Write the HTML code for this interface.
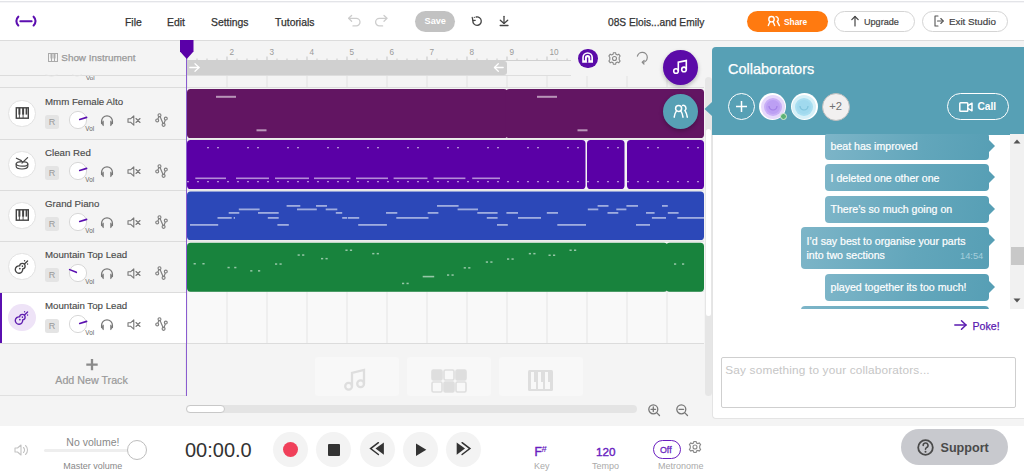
<!DOCTYPE html><html><head><meta charset="utf-8"><style>
*{box-sizing:border-box;margin:0;padding:0}
html,body{width:1024px;height:472px;overflow:hidden;background:#fff;font-family:"Liberation Sans",sans-serif;color:#333}
.a{position:absolute}
.t{position:absolute;white-space:nowrap;line-height:1}
svg{position:absolute;overflow:visible}
</style></head><body>
<div class="a" style="left:0px;top:0px;width:1024px;height:41px;background:#fff;border-bottom:1px solid #dcdcdc"></div>
<div class="a" style="left:0px;top:1px;width:1024px;height:1px;background:#e3e4e8"></div>
<div class="a" style="left:0px;top:2px;width:1024px;height:1px;background:#f5f5f7"></div>
<svg style="left:14px;top:14px" width="24" height="15" viewBox="0 0 24 15"><g stroke="#5c0fb0" stroke-width="2.1" fill="none" stroke-linecap="round"><path d="M4.3 2.7 A6.0 6.0 0 0 0 4.3 11.5"/><path d="M19.6 2.7 A6.0 6.0 0 0 1 19.6 11.5"/><path d="M6.35 7.2 H17.6"/></g></svg>
<div class="t" style="left:125px;top:17.8px;font-size:10.4px;color:#333;-webkit-text-stroke:0.25px #333">File</div>
<div class="t" style="left:167px;top:17.8px;font-size:10.4px;color:#333;-webkit-text-stroke:0.25px #333">Edit</div>
<div class="t" style="left:211px;top:17.8px;font-size:10.4px;color:#333;-webkit-text-stroke:0.25px #333">Settings</div>
<div class="t" style="left:275px;top:17.8px;font-size:10.4px;color:#333;-webkit-text-stroke:0.25px #333">Tutorials</div>
<svg style="left:344px;top:10px" width="50" height="22" viewBox="0 0 50 22"><g stroke="#cdcdcd" stroke-width="1.3" fill="none" stroke-linecap="round" stroke-linejoin="round"><path d="M5 8.3 H12.2 A3.8 3.8 0 0 1 12.2 15.9 H9"/><path d="M7.6 5.5 L4.6 8.3 L7.6 11.2"/><path d="M42.6 8.3 H35.4 A3.8 3.8 0 0 0 35.4 15.9 H38.6"/><path d="M40 5.5 L43 8.3 L40 11.2"/></g></svg>
<div class="a" style="left:415px;top:11px;width:40px;height:21px;background:#c2c2c2;border-radius:11px"></div>
<div class="t" style="left:424.5px;top:16.8px;font-size:9.2px;color:#fff;font-weight:bold">Save</div>
<svg style="left:464px;top:10px" width="50" height="22" viewBox="0 0 50 22"><g stroke="#444" stroke-width="1.3" fill="none" stroke-linecap="round" stroke-linejoin="round"><path d="M12.2 7 A4.2 4.2 0 1 1 8.9 10.6"/><path d="M8.4 8.2 L8.9 10.6 L11.2 10.3"/><path d="M40 6.3 V13.3"/><path d="M36.3 10.2 L40 13.4 L43.7 10.2"/><path d="M36.2 15.5 H44"/></g><circle cx="8.2" cy="7.3" r="0.65" fill="#444"/><circle cx="10.3" cy="7.3" r="0.65" fill="#444"/></svg>
<div class="t" style="left:608px;top:17.8px;font-size:10.2px;color:#333;-webkit-text-stroke:0.25px #333">08S Elois...and Emily</div>
<div class="a" style="left:747px;top:11px;width:81px;height:21px;background:#ff7a10;border-radius:11px"></div>
<svg style="left:760px;top:10px" width="30" height="22" viewBox="0 0 30 22"><g stroke="#fff" stroke-width="1.4" fill="none" stroke-linecap="round"><circle cx="11.5" cy="9.2" r="2.7"/><path d="M8.3 15.6 L10 11.6 M14.7 15.6 L13 11.6"/><path d="M16 6.6 A2.7 2.7 0 0 1 17.3 11.4 L19.4 15.6"/></g></svg>
<div class="t" style="left:784px;top:18.3px;font-size:8.4px;color:#fff;font-weight:bold">Share</div>
<div class="a" style="left:834px;top:11px;width:81px;height:21px;border:1px solid #d4d4d4;border-radius:11px;background:#fff"></div>
<svg style="left:851px;top:15px" width="8" height="12" viewBox="0 0 8 12"><g stroke="#444" stroke-width="1.2" fill="none" stroke-linecap="round" stroke-linejoin="round"><path d="M4 11 V1.5"/><path d="M0.8 4.7 L4 1.5 L7.2 4.7"/></g></svg>
<div class="t" style="left:864px;top:17.7px;font-size:9.1px;color:#444;-webkit-text-stroke:0.2px #444">Upgrade</div>
<div class="a" style="left:922px;top:11px;width:86px;height:21px;border:1px solid #d4d4d4;border-radius:11px;background:#fff"></div>
<svg style="left:934px;top:15px" width="10" height="12" viewBox="0 0 10 12"><g stroke="#555" stroke-width="1.1" fill="none" stroke-linecap="round" stroke-linejoin="round"><path d="M4 1 H1 V11 H4"/><path d="M3.5 6 H9.2"/><path d="M6.8 3.5 L9.2 6 L6.8 8.5"/></g></svg>
<div class="t" style="left:949px;top:16.5px;font-size:9.8px;color:#444;-webkit-text-stroke:0.2px #444">Exit Studio</div>
<div class="a" style="left:0px;top:41px;width:1024px;height:385px;background:#f4f4f4"></div>
<div class="a" style="left:0px;top:41px;width:186px;height:35px;background:#f4f4f4;border-bottom:1px solid #dcdcdc"></div>
<svg style="left:48px;top:53px" width="10" height="9" viewBox="0 0 10 9"><g stroke="#aaa" stroke-width="1" fill="none"><rect x="0.5" y="0.5" width="9" height="8"/><path d="M3.5 0.5 V8.5 M6.5 0.5 V8.5"/></g><rect x="2.5" y="0.5" width="2" height="5" fill="#aaa"/><rect x="5.5" y="0.5" width="2" height="5" fill="#aaa"/></svg>
<div class="t" style="left:61.3px;top:52.6px;font-size:9.9px;color:#999;-webkit-text-stroke:0.25px #999">Show Instrument</div>
<div class="a" style="left:0;top:75px;width:184px;height:13px;overflow:hidden">
</div>
<div class="a" style="left:0px;top:87px;width:186px;height:1px;background:#dcdcdc"></div>
<svg style="left:44px;top:75px" width="40" height="3" viewBox="0 0 40 3"><path d="M1.5 0 Q7.5 2.2 13.5 0" fill="none" stroke="#e2e2e2"/><path d="M28 0 Q33 2 38 0" fill="none" stroke="#e2e2e2"/></svg>
<div class="t" style="left:86px;top:75.2px;font-size:6.2px;color:#666;">Vol</div>
<div class="a" style="left:0px;top:88px;width:186px;height:51px;background:#f4f4f4"></div>
<div class="a" style="left:8.4px;top:99.9px;width:27.3px;height:27.3px;background:#fff;border-radius:50%;border:1px solid #e2e2e2"></div>
<svg style="left:15px;top:107px" width="14" height="12" viewBox="0 0 14 12"><g fill="none" stroke="#444" stroke-width="1.4"><rect x="1.3" y="0.8" width="12" height="10.4"/></g><rect x="3.4" y="0.8" width="2" height="6.8" fill="#444"/><rect x="7.1" y="0.8" width="2" height="6.8" fill="#444"/><rect x="10.6" y="0.8" width="1.6" height="6.8" fill="#444"/><path d="M4.4 7 V11 M8.1 7 V11" stroke="#444" stroke-width="0.9"/></svg>
<div class="t" style="left:45px;top:97.3px;font-size:9.7px;color:#4a4a4a;-webkit-text-stroke:0.15px #4a4a4a">Mmm Female Alto</div>
<div class="a" style="left:45px;top:114.7px;width:14px;height:14px;background:#e4e4e4;border-radius:2.5px"></div>
<div class="t" style="left:48.7px;top:117.6px;font-size:9px;color:#999;">R</div>
<svg style="left:67.6px;top:110.3px" width="20" height="20" viewBox="0 0 20 20"><circle cx="10" cy="10" r="8.6" fill="#fff" stroke="#d8d8d8" stroke-width="1"/><path d="M11.72 9.47 L18.61 7.37" stroke="#5a0fb0" stroke-width="1.6" stroke-linecap="round"/></svg>
<div class="t" style="left:85.3px;top:126.1px;font-size:6.3px;color:#666;">Vol</div>
<svg style="left:100px;top:114px" width="14" height="12" viewBox="0 0 14 12"><g stroke="#777" stroke-width="1.3" fill="none" stroke-linecap="round"><path d="M1.6 9.5 V7.2 A5.4 5.4 0 0 1 12.4 7.2 V9.5"/></g><path d="M3.8 6.6 V12.3 A3 3 0 0 1 3.8 6.6 Z" fill="#808080"/><path d="M10.2 6.6 V12.3 A3 3 0 0 0 10.2 6.6 Z" fill="#808080"/></svg>
<svg style="left:127px;top:115px" width="14" height="11" viewBox="0 0 14 11"><g stroke="#777" stroke-width="1.1" fill="none" stroke-linejoin="round" stroke-linecap="round"><path d="M1 3.8 H3.5 L6.8 0.8 V10.2 L3.5 7.2 H1 Z"/><path d="M9 3.5 L13 7.5 M13 3.5 L9 7.5"/></g></svg>
<svg style="left:155px;top:113px" width="13" height="14" viewBox="0 0 13 14"><g stroke="#808080" stroke-width="1.15" fill="none"><path d="M2.2 7.4 L4.5 2.2 L8.6 11.8 L10.8 5.5"/><circle cx="2.2" cy="7.4" r="1.45" fill="#f3f3f3"/><circle cx="4.5" cy="2.2" r="1.45" fill="#f3f3f3"/><circle cx="8.6" cy="11.8" r="1.5" fill="#f3f3f3"/><circle cx="10.8" cy="5.5" r="1.45" fill="#f3f3f3"/></g></svg>
<div class="a" style="left:0px;top:139px;width:186px;height:51px;background:#f4f4f4"></div>
<div class="a" style="left:8.4px;top:150.9px;width:27.3px;height:27.3px;background:#fff;border-radius:50%;border:1px solid #e2e2e2"></div>
<svg style="left:15px;top:157px" width="14" height="13" viewBox="0 0 14 13"><g fill="none" stroke="#4a4a4a" stroke-width="1.2" stroke-linecap="round"><path d="M1.4 1.2 L6.4 3.6"/><path d="M12.6 0.6 L7 6"/><path d="M1.2 6.9 V9.6 A5.8 2.4 0 0 0 12.8 9.6 V6.9"/><ellipse cx="7" cy="6.9" rx="5.8" ry="2.3"/></g></svg>
<div class="t" style="left:45px;top:148.3px;font-size:9.7px;color:#4a4a4a;-webkit-text-stroke:0.15px #4a4a4a">Clean Red</div>
<div class="a" style="left:45px;top:165.7px;width:14px;height:14px;background:#e4e4e4;border-radius:2.5px"></div>
<div class="t" style="left:48.7px;top:168.6px;font-size:9px;color:#999;">R</div>
<svg style="left:67.6px;top:161.3px" width="20" height="20" viewBox="0 0 20 20"><circle cx="10" cy="10" r="8.6" fill="#fff" stroke="#d8d8d8" stroke-width="1"/><path d="M11.72 9.47 L18.61 7.37" stroke="#5a0fb0" stroke-width="1.6" stroke-linecap="round"/></svg>
<div class="t" style="left:85.3px;top:177.1px;font-size:6.3px;color:#666;">Vol</div>
<svg style="left:100px;top:165px" width="14" height="12" viewBox="0 0 14 12"><g stroke="#777" stroke-width="1.3" fill="none" stroke-linecap="round"><path d="M1.6 9.5 V7.2 A5.4 5.4 0 0 1 12.4 7.2 V9.5"/></g><path d="M3.8 6.6 V12.3 A3 3 0 0 1 3.8 6.6 Z" fill="#808080"/><path d="M10.2 6.6 V12.3 A3 3 0 0 0 10.2 6.6 Z" fill="#808080"/></svg>
<svg style="left:127px;top:166px" width="14" height="11" viewBox="0 0 14 11"><g stroke="#777" stroke-width="1.1" fill="none" stroke-linejoin="round" stroke-linecap="round"><path d="M1 3.8 H3.5 L6.8 0.8 V10.2 L3.5 7.2 H1 Z"/><path d="M9 3.5 L13 7.5 M13 3.5 L9 7.5"/></g></svg>
<svg style="left:155px;top:164px" width="13" height="14" viewBox="0 0 13 14"><g stroke="#808080" stroke-width="1.15" fill="none"><path d="M2.2 7.4 L4.5 2.2 L8.6 11.8 L10.8 5.5"/><circle cx="2.2" cy="7.4" r="1.45" fill="#f3f3f3"/><circle cx="4.5" cy="2.2" r="1.45" fill="#f3f3f3"/><circle cx="8.6" cy="11.8" r="1.5" fill="#f3f3f3"/><circle cx="10.8" cy="5.5" r="1.45" fill="#f3f3f3"/></g></svg>
<div class="a" style="left:0px;top:190px;width:186px;height:51px;background:#f4f4f4"></div>
<div class="a" style="left:8.4px;top:201.9px;width:27.3px;height:27.3px;background:#fff;border-radius:50%;border:1px solid #e2e2e2"></div>
<svg style="left:15px;top:209px" width="14" height="12" viewBox="0 0 14 12"><g fill="none" stroke="#444" stroke-width="1.4"><rect x="1.3" y="0.8" width="12" height="10.4"/></g><rect x="3.4" y="0.8" width="2" height="6.8" fill="#444"/><rect x="7.1" y="0.8" width="2" height="6.8" fill="#444"/><rect x="10.6" y="0.8" width="1.6" height="6.8" fill="#444"/><path d="M4.4 7 V11 M8.1 7 V11" stroke="#444" stroke-width="0.9"/></svg>
<div class="t" style="left:45px;top:199.3px;font-size:9.7px;color:#4a4a4a;-webkit-text-stroke:0.15px #4a4a4a">Grand Piano</div>
<div class="a" style="left:45px;top:216.7px;width:14px;height:14px;background:#e4e4e4;border-radius:2.5px"></div>
<div class="t" style="left:48.7px;top:219.6px;font-size:9px;color:#999;">R</div>
<svg style="left:67.6px;top:212.3px" width="20" height="20" viewBox="0 0 20 20"><circle cx="10" cy="10" r="8.6" fill="#fff" stroke="#d8d8d8" stroke-width="1"/><path d="M11.72 9.47 L18.61 7.37" stroke="#5a0fb0" stroke-width="1.6" stroke-linecap="round"/></svg>
<div class="t" style="left:85.3px;top:228.1px;font-size:6.3px;color:#666;">Vol</div>
<svg style="left:100px;top:216px" width="14" height="12" viewBox="0 0 14 12"><g stroke="#777" stroke-width="1.3" fill="none" stroke-linecap="round"><path d="M1.6 9.5 V7.2 A5.4 5.4 0 0 1 12.4 7.2 V9.5"/></g><path d="M3.8 6.6 V12.3 A3 3 0 0 1 3.8 6.6 Z" fill="#808080"/><path d="M10.2 6.6 V12.3 A3 3 0 0 0 10.2 6.6 Z" fill="#808080"/></svg>
<svg style="left:127px;top:217px" width="14" height="11" viewBox="0 0 14 11"><g stroke="#777" stroke-width="1.1" fill="none" stroke-linejoin="round" stroke-linecap="round"><path d="M1 3.8 H3.5 L6.8 0.8 V10.2 L3.5 7.2 H1 Z"/><path d="M9 3.5 L13 7.5 M13 3.5 L9 7.5"/></g></svg>
<svg style="left:155px;top:215px" width="13" height="14" viewBox="0 0 13 14"><g stroke="#808080" stroke-width="1.15" fill="none"><path d="M2.2 7.4 L4.5 2.2 L8.6 11.8 L10.8 5.5"/><circle cx="2.2" cy="7.4" r="1.45" fill="#f3f3f3"/><circle cx="4.5" cy="2.2" r="1.45" fill="#f3f3f3"/><circle cx="8.6" cy="11.8" r="1.5" fill="#f3f3f3"/><circle cx="10.8" cy="5.5" r="1.45" fill="#f3f3f3"/></g></svg>
<div class="a" style="left:0px;top:241px;width:186px;height:51px;background:#f4f4f4"></div>
<div class="a" style="left:8.4px;top:252.9px;width:27.3px;height:27.3px;background:#fff;border-radius:50%;border:1px solid #e2e2e2"></div>
<svg style="left:15px;top:258px" width="14" height="16" viewBox="0 0 14 16"><g transform="translate(6.2 9.3) rotate(45)"><g fill="none" stroke="#444" stroke-width="1.35" stroke-linecap="round" stroke-linejoin="round"><path d="M-2.1 0.1 A2.75 2.75 0 1 1 2.1 0.1 A3.7 3.7 0 1 1 -2.1 0.1 Z"/><path d="M0 -4.6 V-9"/></g><circle cx="0" cy="1.9" r="0.85" fill="#444"/><circle cx="0" cy="-1.7" r="0.8" fill="#444"/><circle cx="-2.2" cy="-7" r="0.7" fill="#444"/><circle cx="2.1" cy="-6.9" r="0.7" fill="#444"/></g></svg>
<div class="t" style="left:45px;top:250.3px;font-size:9.7px;color:#4a4a4a;-webkit-text-stroke:0.15px #4a4a4a">Mountain Top Lead</div>
<div class="a" style="left:45px;top:267.7px;width:14px;height:14px;background:#e4e4e4;border-radius:2.5px"></div>
<div class="t" style="left:48.7px;top:270.6px;font-size:9px;color:#999;">R</div>
<svg style="left:67.6px;top:263.3px" width="20" height="20" viewBox="0 0 20 20"><circle cx="10" cy="10" r="8.6" fill="#fff" stroke="#d8d8d8" stroke-width="1"/><path d="M8.33 9.33 L1.66 6.63" stroke="#5a0fb0" stroke-width="1.6" stroke-linecap="round"/></svg>
<div class="t" style="left:85.3px;top:279.1px;font-size:6.3px;color:#666;">Vol</div>
<svg style="left:100px;top:267px" width="14" height="12" viewBox="0 0 14 12"><g stroke="#777" stroke-width="1.3" fill="none" stroke-linecap="round"><path d="M1.6 9.5 V7.2 A5.4 5.4 0 0 1 12.4 7.2 V9.5"/></g><path d="M3.8 6.6 V12.3 A3 3 0 0 1 3.8 6.6 Z" fill="#808080"/><path d="M10.2 6.6 V12.3 A3 3 0 0 0 10.2 6.6 Z" fill="#808080"/></svg>
<svg style="left:127px;top:268px" width="14" height="11" viewBox="0 0 14 11"><g stroke="#777" stroke-width="1.1" fill="none" stroke-linejoin="round" stroke-linecap="round"><path d="M1 3.8 H3.5 L6.8 0.8 V10.2 L3.5 7.2 H1 Z"/><path d="M9 3.5 L13 7.5 M13 3.5 L9 7.5"/></g></svg>
<svg style="left:155px;top:266px" width="13" height="14" viewBox="0 0 13 14"><g stroke="#808080" stroke-width="1.15" fill="none"><path d="M2.2 7.4 L4.5 2.2 L8.6 11.8 L10.8 5.5"/><circle cx="2.2" cy="7.4" r="1.45" fill="#f3f3f3"/><circle cx="4.5" cy="2.2" r="1.45" fill="#f3f3f3"/><circle cx="8.6" cy="11.8" r="1.5" fill="#f3f3f3"/><circle cx="10.8" cy="5.5" r="1.45" fill="#f3f3f3"/></g></svg>
<div class="a" style="left:0px;top:292px;width:186px;height:51px;background:#fff"></div>
<div class="a" style="left:0px;top:292px;width:2px;height:51px;background:#5a0fb0"></div>
<div class="a" style="left:8.4px;top:303.9px;width:27.3px;height:27.3px;background:#eee3f7;border-radius:50%;border:none"></div>
<svg style="left:15px;top:309px" width="14" height="16" viewBox="0 0 14 16"><g transform="translate(6.2 9.3) rotate(45)"><g fill="none" stroke="#5f1fb0" stroke-width="1.35" stroke-linecap="round" stroke-linejoin="round"><path d="M-2.1 0.1 A2.75 2.75 0 1 1 2.1 0.1 A3.7 3.7 0 1 1 -2.1 0.1 Z"/><path d="M0 -4.6 V-9"/></g><circle cx="0" cy="1.9" r="0.85" fill="#5f1fb0"/><circle cx="0" cy="-1.7" r="0.8" fill="#5f1fb0"/><circle cx="-2.2" cy="-7" r="0.7" fill="#5f1fb0"/><circle cx="2.1" cy="-6.9" r="0.7" fill="#5f1fb0"/></g></svg>
<div class="t" style="left:45px;top:301.3px;font-size:9.7px;color:#4a4a4a;-webkit-text-stroke:0.15px #4a4a4a">Mountain Top Lead</div>
<div class="a" style="left:45px;top:318.7px;width:14px;height:14px;background:#e4e4e4;border-radius:2.5px"></div>
<div class="t" style="left:48.7px;top:321.6px;font-size:9px;color:#999;">R</div>
<svg style="left:67.6px;top:314.3px" width="20" height="20" viewBox="0 0 20 20"><circle cx="10" cy="10" r="8.6" fill="#fff" stroke="#d8d8d8" stroke-width="1"/><path d="M11.72 9.47 L18.61 7.37" stroke="#5a0fb0" stroke-width="1.6" stroke-linecap="round"/></svg>
<div class="t" style="left:85.3px;top:330.1px;font-size:6.3px;color:#666;">Vol</div>
<svg style="left:100px;top:318px" width="14" height="12" viewBox="0 0 14 12"><g stroke="#777" stroke-width="1.3" fill="none" stroke-linecap="round"><path d="M1.6 9.5 V7.2 A5.4 5.4 0 0 1 12.4 7.2 V9.5"/></g><path d="M3.8 6.6 V12.3 A3 3 0 0 1 3.8 6.6 Z" fill="#808080"/><path d="M10.2 6.6 V12.3 A3 3 0 0 0 10.2 6.6 Z" fill="#808080"/></svg>
<svg style="left:127px;top:319px" width="14" height="11" viewBox="0 0 14 11"><g stroke="#777" stroke-width="1.1" fill="none" stroke-linejoin="round" stroke-linecap="round"><path d="M1 3.8 H3.5 L6.8 0.8 V10.2 L3.5 7.2 H1 Z"/><path d="M9 3.5 L13 7.5 M13 3.5 L9 7.5"/></g></svg>
<svg style="left:155px;top:317px" width="13" height="14" viewBox="0 0 13 14"><g stroke="#808080" stroke-width="1.15" fill="none"><path d="M2.2 7.4 L4.5 2.2 L8.6 11.8 L10.8 5.5"/><circle cx="2.2" cy="7.4" r="1.45" fill="#f3f3f3"/><circle cx="4.5" cy="2.2" r="1.45" fill="#f3f3f3"/><circle cx="8.6" cy="11.8" r="1.5" fill="#f3f3f3"/><circle cx="10.8" cy="5.5" r="1.45" fill="#f3f3f3"/></g></svg>
<div class="a" style="left:0px;top:395px;width:186px;height:1px;background:#e0e0e0"></div>
<div class="a" style="left:185px;top:344px;width:1px;height:51px;background:#ececec"></div>
<div class="a" style="left:0px;top:139px;width:186px;height:1px;background:#dcdcdc"></div>
<div class="a" style="left:0px;top:190px;width:186px;height:1px;background:#dcdcdc"></div>
<div class="a" style="left:0px;top:241px;width:186px;height:1px;background:#dcdcdc"></div>
<div class="a" style="left:0px;top:292px;width:186px;height:1px;background:#dcdcdc"></div>
<div class="a" style="left:0px;top:343px;width:186px;height:1px;background:#dcdcdc"></div>
<svg style="left:85.5px;top:359.3px" width="12" height="12" viewBox="0 0 12 12"><path d="M6 0 V11.3 M0.3 5.65 H11.7" stroke="#8a8a8a" stroke-width="2.3"/></svg>
<div class="t" style="left:55.3px;top:375.3px;font-size:10.7px;color:#999;-webkit-text-stroke:0.2px #999">Add New Track</div>
<svg style="left:0;top:0" width="1024" height="472"><rect x="186.5" y="56.5" width="1" height="4" fill="#c4c4c4"/><rect x="196.5" y="58.5" width="1" height="2" fill="#c8c8c8"/><rect x="206.5" y="58.5" width="1" height="2" fill="#c8c8c8"/><rect x="216.5" y="58.5" width="1" height="2" fill="#c8c8c8"/><rect x="226.5" y="56.5" width="1" height="4" fill="#c4c4c4"/><rect x="236.5" y="58.5" width="1" height="2" fill="#c8c8c8"/><rect x="246.5" y="58.5" width="1" height="2" fill="#c8c8c8"/><rect x="256.5" y="58.5" width="1" height="2" fill="#c8c8c8"/><rect x="266.5" y="56.5" width="1" height="4" fill="#c4c4c4"/><rect x="276.5" y="58.5" width="1" height="2" fill="#c8c8c8"/><rect x="286.5" y="58.5" width="1" height="2" fill="#c8c8c8"/><rect x="296.5" y="58.5" width="1" height="2" fill="#c8c8c8"/><rect x="306.5" y="56.5" width="1" height="4" fill="#c4c4c4"/><rect x="316.5" y="58.5" width="1" height="2" fill="#c8c8c8"/><rect x="326.5" y="58.5" width="1" height="2" fill="#c8c8c8"/><rect x="336.5" y="58.5" width="1" height="2" fill="#c8c8c8"/><rect x="346.5" y="56.5" width="1" height="4" fill="#c4c4c4"/><rect x="356.5" y="58.5" width="1" height="2" fill="#c8c8c8"/><rect x="366.5" y="58.5" width="1" height="2" fill="#c8c8c8"/><rect x="376.5" y="58.5" width="1" height="2" fill="#c8c8c8"/><rect x="386.5" y="56.5" width="1" height="4" fill="#c4c4c4"/><rect x="396.5" y="58.5" width="1" height="2" fill="#c8c8c8"/><rect x="406.5" y="58.5" width="1" height="2" fill="#c8c8c8"/><rect x="416.5" y="58.5" width="1" height="2" fill="#c8c8c8"/><rect x="426.5" y="56.5" width="1" height="4" fill="#c4c4c4"/><rect x="436.5" y="58.5" width="1" height="2" fill="#c8c8c8"/><rect x="446.5" y="58.5" width="1" height="2" fill="#c8c8c8"/><rect x="456.5" y="58.5" width="1" height="2" fill="#c8c8c8"/><rect x="466.5" y="56.5" width="1" height="4" fill="#c4c4c4"/><rect x="476.5" y="58.5" width="1" height="2" fill="#c8c8c8"/><rect x="486.5" y="58.5" width="1" height="2" fill="#c8c8c8"/><rect x="496.5" y="58.5" width="1" height="2" fill="#c8c8c8"/><rect x="506.5" y="56.5" width="1" height="4" fill="#c4c4c4"/><rect x="516.5" y="58.5" width="1" height="2" fill="#c8c8c8"/><rect x="526.5" y="58.5" width="1" height="2" fill="#c8c8c8"/><rect x="536.5" y="58.5" width="1" height="2" fill="#c8c8c8"/><rect x="546.5" y="56.5" width="1" height="4" fill="#c4c4c4"/><rect x="556.5" y="58.5" width="1" height="2" fill="#c8c8c8"/><rect x="566.5" y="58.5" width="1" height="2" fill="#c8c8c8"/><rect x="186" y="60" width="385" height="1" fill="#d0d0d0"/><rect x="186" y="75" width="385" height="1" fill="#dedede"/></svg>
<div class="t" style="left:229.5px;top:48.5px;font-size:8.2px;color:#9a9a9a;">2</div>
<div class="t" style="left:269.5px;top:48.5px;font-size:8.2px;color:#9a9a9a;">3</div>
<div class="t" style="left:309.5px;top:48.5px;font-size:8.2px;color:#9a9a9a;">4</div>
<div class="t" style="left:349.5px;top:48.5px;font-size:8.2px;color:#9a9a9a;">5</div>
<div class="t" style="left:389.5px;top:48.5px;font-size:8.2px;color:#9a9a9a;">6</div>
<div class="t" style="left:429.5px;top:48.5px;font-size:8.2px;color:#9a9a9a;">7</div>
<div class="t" style="left:469.5px;top:48.5px;font-size:8.2px;color:#9a9a9a;">8</div>
<div class="t" style="left:509.5px;top:48.5px;font-size:8.2px;color:#9a9a9a;">9</div>
<div class="t" style="left:549.5px;top:48.5px;font-size:8.2px;color:#9a9a9a;">10</div>
<div class="a" style="left:187px;top:61px;width:320px;height:14px;background:#d0d0d0;border-radius:0 3px 3px 0"></div>
<svg style="left:189px;top:63px" width="11" height="9" viewBox="0 0 11 9"><g stroke="#fff" stroke-width="1.3" fill="none" stroke-linecap="round" stroke-linejoin="round"><path d="M0.8 4.5 H10"/><path d="M6 0.8 L10 4.5 L6 8.2"/></g></svg>
<svg style="left:494px;top:63px" width="10" height="9" viewBox="0 0 10 9"><g stroke="#fff" stroke-width="1.3" fill="none" stroke-linecap="round" stroke-linejoin="round"><path d="M9.2 4.5 H0.5"/><path d="M4.3 0.8 L0.5 4.5 L4.3 8.2"/></g></svg>
<svg style="left:0;top:0" width="1024" height="472"><rect x="186" y="292" width="518" height="51" fill="#f9f9f9"/><rect x="186.5" y="76" width="1" height="12" fill="#e2e2e2"/><rect x="186.5" y="292" width="1" height="51" fill="#e6e6e6"/><rect x="226.5" y="76" width="1" height="12" fill="#e2e2e2"/><rect x="226.5" y="292" width="1" height="51" fill="#e6e6e6"/><rect x="266.5" y="76" width="1" height="12" fill="#e2e2e2"/><rect x="266.5" y="292" width="1" height="51" fill="#e6e6e6"/><rect x="306.5" y="76" width="1" height="12" fill="#e2e2e2"/><rect x="306.5" y="292" width="1" height="51" fill="#e6e6e6"/><rect x="346.5" y="76" width="1" height="12" fill="#e2e2e2"/><rect x="346.5" y="292" width="1" height="51" fill="#e6e6e6"/><rect x="386.5" y="76" width="1" height="12" fill="#e2e2e2"/><rect x="386.5" y="292" width="1" height="51" fill="#e6e6e6"/><rect x="426.5" y="76" width="1" height="12" fill="#e2e2e2"/><rect x="426.5" y="292" width="1" height="51" fill="#e6e6e6"/><rect x="466.5" y="76" width="1" height="12" fill="#e2e2e2"/><rect x="466.5" y="292" width="1" height="51" fill="#e6e6e6"/><rect x="506.5" y="76" width="1" height="12" fill="#e2e2e2"/><rect x="506.5" y="292" width="1" height="51" fill="#e6e6e6"/><rect x="546.5" y="76" width="1" height="12" fill="#e2e2e2"/><rect x="546.5" y="292" width="1" height="51" fill="#e6e6e6"/><rect x="586.5" y="76" width="1" height="12" fill="#e2e2e2"/><rect x="586.5" y="292" width="1" height="51" fill="#e6e6e6"/><rect x="626.5" y="76" width="1" height="12" fill="#e2e2e2"/><rect x="626.5" y="292" width="1" height="51" fill="#e6e6e6"/><rect x="666.5" y="76" width="1" height="12" fill="#e2e2e2"/><rect x="666.5" y="292" width="1" height="51" fill="#e6e6e6"/><rect x="186" y="87" width="518" height="1" fill="#dcdcdc"/><rect x="186" y="138.5" width="518" height="1.5" fill="#e6e6e6"/><rect x="186" y="189.5" width="518" height="1.5" fill="#e6e6e6"/><rect x="186" y="240.5" width="518" height="1.5" fill="#e6e6e6"/><rect x="186" y="291" width="518" height="1" fill="#e6e6e6"/><rect x="186" y="343" width="518" height="1" fill="#dcdcdc"/></svg>
<svg style="left:0;top:0" width="1024" height="472"><rect x="187" y="89" width="320.6" height="49" rx="3.6" fill="#621562"/><rect x="505.8" y="89" width="198.2" height="49" rx="3.6" fill="#621562"/><rect x="216" y="95.8" width="20" height="2" fill="rgba(255,255,255,.55)"/><rect x="256.5" y="129.3" width="10.0" height="2" fill="rgba(255,255,255,.55)"/><rect x="537" y="95.8" width="20" height="2" fill="rgba(255,255,255,.55)"/><rect x="577.5" y="129.3" width="10.0" height="2" fill="rgba(255,255,255,.55)"/><rect x="187" y="140" width="398.5" height="49" rx="3.6" fill="#5a00a6"/><rect x="587" y="140" width="37.5" height="49" rx="3.6" fill="#5a00a6"/><rect x="627" y="140" width="77" height="49" rx="3.6" fill="#5a00a6"/><rect x="207" y="147" width="2" height="1.3" fill="rgba(255,255,255,.55)"/><rect x="217" y="147" width="2" height="1.3" fill="rgba(255,255,255,.55)"/><rect x="247" y="147" width="2" height="1.3" fill="rgba(255,255,255,.55)"/><rect x="257" y="147" width="2" height="1.3" fill="rgba(255,255,255,.55)"/><rect x="287" y="147" width="2" height="1.3" fill="rgba(255,255,255,.55)"/><rect x="297" y="147" width="2" height="1.3" fill="rgba(255,255,255,.55)"/><rect x="327" y="147" width="2" height="1.3" fill="rgba(255,255,255,.55)"/><rect x="337" y="147" width="2" height="1.3" fill="rgba(255,255,255,.55)"/><rect x="367" y="147" width="2" height="1.3" fill="rgba(255,255,255,.55)"/><rect x="377" y="147" width="2" height="1.3" fill="rgba(255,255,255,.55)"/><rect x="407" y="147" width="2" height="1.3" fill="rgba(255,255,255,.55)"/><rect x="417" y="147" width="2" height="1.3" fill="rgba(255,255,255,.55)"/><rect x="447" y="147" width="2" height="1.3" fill="rgba(255,255,255,.55)"/><rect x="457" y="147" width="2" height="1.3" fill="rgba(255,255,255,.55)"/><rect x="487" y="147" width="2" height="1.3" fill="rgba(255,255,255,.55)"/><rect x="497" y="147" width="2" height="1.3" fill="rgba(255,255,255,.55)"/><rect x="527" y="147" width="2" height="1.3" fill="rgba(255,255,255,.55)"/><rect x="537" y="147" width="2" height="1.3" fill="rgba(255,255,255,.55)"/><rect x="567" y="147" width="2" height="1.3" fill="rgba(255,255,255,.55)"/><rect x="577" y="147" width="2" height="1.3" fill="rgba(255,255,255,.55)"/><rect x="607" y="147" width="2" height="1.3" fill="rgba(255,255,255,.55)"/><rect x="617" y="147" width="2" height="1.3" fill="rgba(255,255,255,.55)"/><rect x="647" y="147" width="2" height="1.3" fill="rgba(255,255,255,.55)"/><rect x="657" y="147" width="2" height="1.3" fill="rgba(255,255,255,.55)"/><rect x="687" y="147" width="2" height="1.3" fill="rgba(255,255,255,.55)"/><rect x="697" y="147" width="2" height="1.3" fill="rgba(255,255,255,.55)"/><rect x="187" y="181" width="2" height="1.3" fill="rgba(255,255,255,.55)"/><rect x="197" y="181" width="2" height="1.3" fill="rgba(255,255,255,.55)"/><rect x="207" y="181" width="2" height="1.3" fill="rgba(255,255,255,.55)"/><rect x="217" y="181" width="2" height="1.3" fill="rgba(255,255,255,.55)"/><rect x="227" y="181" width="2" height="1.3" fill="rgba(255,255,255,.55)"/><rect x="237" y="181" width="2" height="1.3" fill="rgba(255,255,255,.55)"/><rect x="247" y="181" width="2" height="1.3" fill="rgba(255,255,255,.55)"/><rect x="257" y="181" width="2" height="1.3" fill="rgba(255,255,255,.55)"/><rect x="267" y="181" width="2" height="1.3" fill="rgba(255,255,255,.55)"/><rect x="277" y="181" width="2" height="1.3" fill="rgba(255,255,255,.55)"/><rect x="287" y="181" width="2" height="1.3" fill="rgba(255,255,255,.55)"/><rect x="297" y="181" width="2" height="1.3" fill="rgba(255,255,255,.55)"/><rect x="307" y="181" width="2" height="1.3" fill="rgba(255,255,255,.55)"/><rect x="317" y="181" width="2" height="1.3" fill="rgba(255,255,255,.55)"/><rect x="327" y="181" width="2" height="1.3" fill="rgba(255,255,255,.55)"/><rect x="337" y="181" width="2" height="1.3" fill="rgba(255,255,255,.55)"/><rect x="347" y="181" width="2" height="1.3" fill="rgba(255,255,255,.55)"/><rect x="357" y="181" width="2" height="1.3" fill="rgba(255,255,255,.55)"/><rect x="367" y="181" width="2" height="1.3" fill="rgba(255,255,255,.55)"/><rect x="377" y="181" width="2" height="1.3" fill="rgba(255,255,255,.55)"/><rect x="387" y="181" width="2" height="1.3" fill="rgba(255,255,255,.55)"/><rect x="397" y="181" width="2" height="1.3" fill="rgba(255,255,255,.55)"/><rect x="407" y="181" width="2" height="1.3" fill="rgba(255,255,255,.55)"/><rect x="417" y="181" width="2" height="1.3" fill="rgba(255,255,255,.55)"/><rect x="427" y="181" width="2" height="1.3" fill="rgba(255,255,255,.55)"/><rect x="437" y="181" width="2" height="1.3" fill="rgba(255,255,255,.55)"/><rect x="447" y="181" width="2" height="1.3" fill="rgba(255,255,255,.55)"/><rect x="457" y="181" width="2" height="1.3" fill="rgba(255,255,255,.55)"/><rect x="467" y="181" width="2" height="1.3" fill="rgba(255,255,255,.55)"/><rect x="477" y="181" width="2" height="1.3" fill="rgba(255,255,255,.55)"/><rect x="487" y="181" width="2" height="1.3" fill="rgba(255,255,255,.55)"/><rect x="497" y="181" width="2" height="1.3" fill="rgba(255,255,255,.55)"/><rect x="507" y="181" width="2" height="1.3" fill="rgba(255,255,255,.55)"/><rect x="517" y="181" width="2" height="1.3" fill="rgba(255,255,255,.55)"/><rect x="527" y="181" width="2" height="1.3" fill="rgba(255,255,255,.55)"/><rect x="537" y="181" width="2" height="1.3" fill="rgba(255,255,255,.55)"/><rect x="547" y="181" width="2" height="1.3" fill="rgba(255,255,255,.55)"/><rect x="557" y="181" width="2" height="1.3" fill="rgba(255,255,255,.55)"/><rect x="567" y="181" width="2" height="1.3" fill="rgba(255,255,255,.55)"/><rect x="577" y="181" width="2" height="1.3" fill="rgba(255,255,255,.55)"/><rect x="587" y="181" width="2" height="1.3" fill="rgba(255,255,255,.55)"/><rect x="597" y="181" width="2" height="1.3" fill="rgba(255,255,255,.55)"/><rect x="607" y="181" width="2" height="1.3" fill="rgba(255,255,255,.55)"/><rect x="617" y="181" width="2" height="1.3" fill="rgba(255,255,255,.55)"/><rect x="627" y="181" width="2" height="1.3" fill="rgba(255,255,255,.55)"/><rect x="637" y="181" width="2" height="1.3" fill="rgba(255,255,255,.55)"/><rect x="647" y="181" width="2" height="1.3" fill="rgba(255,255,255,.55)"/><rect x="657" y="181" width="2" height="1.3" fill="rgba(255,255,255,.55)"/><rect x="667" y="181" width="2" height="1.3" fill="rgba(255,255,255,.55)"/><rect x="677" y="181" width="2" height="1.3" fill="rgba(255,255,255,.55)"/><rect x="687" y="181" width="2" height="1.3" fill="rgba(255,255,255,.55)"/><rect x="697" y="181" width="2" height="1.3" fill="rgba(255,255,255,.55)"/><rect x="195.3" y="177.5" width="30.69999999999999" height="1.6" fill="rgba(255,255,255,.55)"/><rect x="236" y="177.5" width="33" height="1.6" fill="rgba(255,255,255,.55)"/><rect x="275" y="177.5" width="34" height="1.6" fill="rgba(255,255,255,.55)"/><rect x="314" y="177.5" width="36.5" height="1.6" fill="rgba(255,255,255,.55)"/><rect x="356" y="177.5" width="32" height="1.6" fill="rgba(255,255,255,.55)"/><rect x="393.6" y="177.5" width="33.89999999999998" height="1.6" fill="rgba(255,255,255,.55)"/><rect x="433.6" y="177.5" width="31.799999999999955" height="1.6" fill="rgba(255,255,255,.55)"/><rect x="472.2" y="177.5" width="27.80000000000001" height="1.6" fill="rgba(255,255,255,.55)"/><rect x="187" y="191.5" width="517" height="48.5" rx="3.6" fill="#2c48b8"/><rect x="286.6" y="205" width="13.699999999999989" height="1.8" fill="rgba(255,255,255,.55)"/><rect x="316" y="205" width="11" height="1.8" fill="rgba(255,255,255,.55)"/><rect x="437" y="205" width="21.600000000000023" height="1.8" fill="rgba(255,255,255,.55)"/><rect x="597.6" y="205" width="10.899999999999977" height="1.8" fill="rgba(255,255,255,.55)"/><rect x="626.4" y="205" width="11.600000000000023" height="1.8" fill="rgba(255,255,255,.55)"/><rect x="662" y="205" width="5.7999999999999545" height="1.8" fill="rgba(255,255,255,.55)"/><rect x="238.8" y="208.5" width="20.80000000000001" height="1.8" fill="rgba(255,255,255,.55)"/><rect x="297" y="208.5" width="19.80000000000001" height="1.8" fill="rgba(255,255,255,.55)"/><rect x="325.7" y="208.5" width="11.600000000000023" height="1.8" fill="rgba(255,255,255,.55)"/><rect x="457.6" y="208.5" width="20.399999999999977" height="1.8" fill="rgba(255,255,255,.55)"/><rect x="587.8" y="208.5" width="10.5" height="1.8" fill="rgba(255,255,255,.55)"/><rect x="616.3" y="208.5" width="10.100000000000023" height="1.8" fill="rgba(255,255,255,.55)"/><rect x="228.7" y="212" width="10.600000000000023" height="1.8" fill="rgba(255,255,255,.55)"/><rect x="258" y="212" width="20.69999999999999" height="1.8" fill="rgba(255,255,255,.55)"/><rect x="335.8" y="212" width="6.399999999999977" height="1.8" fill="rgba(255,255,255,.55)"/><rect x="386" y="212" width="11.300000000000011" height="1.8" fill="rgba(255,255,255,.55)"/><rect x="427.7" y="212" width="10.699999999999989" height="1.8" fill="rgba(255,255,255,.55)"/><rect x="477.3" y="212" width="20.30000000000001" height="1.8" fill="rgba(255,255,255,.55)"/><rect x="506.4" y="212" width="11.600000000000023" height="1.8" fill="rgba(255,255,255,.55)"/><rect x="546.8" y="212" width="11.200000000000045" height="1.8" fill="rgba(255,255,255,.55)"/><rect x="607.5" y="212" width="10.799999999999955" height="1.8" fill="rgba(255,255,255,.55)"/><rect x="646" y="212" width="8.600000000000023" height="1.8" fill="rgba(255,255,255,.55)"/><rect x="667.8" y="212" width="10.800000000000068" height="1.8" fill="rgba(255,255,255,.55)"/><rect x="217.5" y="217" width="14.199999999999989" height="1.8" fill="rgba(255,255,255,.55)"/><rect x="233.7" y="217" width="1.3000000000000114" height="1.8" fill="rgba(255,255,255,.55)"/><rect x="267.8" y="217" width="10.899999999999977" height="1.8" fill="rgba(255,255,255,.55)"/><rect x="342.2" y="217" width="5.0" height="1.8" fill="rgba(255,255,255,.55)"/><rect x="348" y="217" width="11.199999999999989" height="1.8" fill="rgba(255,255,255,.55)"/><rect x="396.3" y="217" width="32.19999999999999" height="1.8" fill="rgba(255,255,255,.55)"/><rect x="486.8" y="217" width="10.800000000000011" height="1.8" fill="rgba(255,255,255,.55)"/><rect x="518" y="217" width="23" height="1.8" fill="rgba(255,255,255,.55)"/><rect x="651.9" y="217" width="14.100000000000023" height="1.8" fill="rgba(255,255,255,.55)"/><rect x="677.3" y="217" width="26.700000000000045" height="1.8" fill="rgba(255,255,255,.55)"/><rect x="190" y="224" width="28.19999999999999" height="1.8" fill="rgba(255,255,255,.55)"/><rect x="277.4" y="224" width="11.400000000000034" height="1.8" fill="rgba(255,255,255,.55)"/><rect x="358.2" y="224" width="28.69999999999999" height="1.8" fill="rgba(255,255,255,.55)"/><rect x="497" y="224" width="10.800000000000011" height="1.8" fill="rgba(255,255,255,.55)"/><rect x="557.3" y="224" width="28.700000000000045" height="1.8" fill="rgba(255,255,255,.55)"/><rect x="636" y="224" width="14" height="1.8" fill="rgba(255,255,255,.55)"/><rect x="187" y="242.8" width="480.6" height="48.9" rx="3.6" fill="#18833d"/><rect x="666" y="242.8" width="38" height="48.9" rx="3.6" fill="#18833d"/><rect x="193.6" y="263.0" width="2.1999999999999886" height="1.5" fill="rgba(255,255,255,.55)"/><rect x="202.4" y="263.0" width="2.1999999999999886" height="1.5" fill="rgba(255,255,255,.55)"/><rect x="227.5" y="266.8" width="2.1999999999999886" height="1.5" fill="rgba(255,255,255,.55)"/><rect x="234.2" y="266.8" width="2.1999999999999886" height="1.5" fill="rgba(255,255,255,.55)"/><rect x="250.2" y="270.1" width="2.1999999999999886" height="1.5" fill="rgba(255,255,255,.55)"/><rect x="258.0" y="270.1" width="2.1999999999999886" height="1.5" fill="rgba(255,255,255,.55)"/><rect x="275" y="263.3" width="2.1999999999999886" height="1.5" fill="rgba(255,255,255,.55)"/><rect x="279.5" y="263.3" width="2.1999999999999886" height="1.5" fill="rgba(255,255,255,.55)"/><rect x="297.6" y="254.3" width="2.1999999999999886" height="1.5" fill="rgba(255,255,255,.55)"/><rect x="302.1" y="254.3" width="2.1999999999999886" height="1.5" fill="rgba(255,255,255,.55)"/><rect x="321" y="257.90000000000003" width="2.1999999999999886" height="1.5" fill="rgba(255,255,255,.55)"/><rect x="325.5" y="257.90000000000003" width="2.1999999999999886" height="1.5" fill="rgba(255,255,255,.55)"/><rect x="345.4" y="249.5" width="2.1999999999999886" height="1.5" fill="rgba(255,255,255,.55)"/><rect x="349.9" y="249.5" width="2.1999999999999886" height="1.5" fill="rgba(255,255,255,.55)"/><rect x="372.2" y="252.9" width="2.1999999999999886" height="1.5" fill="rgba(255,255,255,.55)"/><rect x="376.7" y="252.9" width="2.1999999999999886" height="1.5" fill="rgba(255,255,255,.55)"/><rect x="402" y="282.7" width="2.1999999999999886" height="1.5" fill="rgba(255,255,255,.55)"/><rect x="406.5" y="282.7" width="2.1999999999999886" height="1.5" fill="rgba(255,255,255,.55)"/><rect x="447" y="274.3" width="2.1999999999999886" height="1.5" fill="rgba(255,255,255,.55)"/><rect x="451.5" y="274.3" width="2.1999999999999886" height="1.5" fill="rgba(255,255,255,.55)"/><rect x="463.7" y="267.1" width="2.1999999999999886" height="1.5" fill="rgba(255,255,255,.55)"/><rect x="468.2" y="267.1" width="2.1999999999999886" height="1.5" fill="rgba(255,255,255,.55)"/><rect x="485.8" y="261.3" width="2.1999999999999886" height="1.5" fill="rgba(255,255,255,.55)"/><rect x="490.3" y="261.3" width="2.1999999999999886" height="1.5" fill="rgba(255,255,255,.55)"/><rect x="507" y="258.3" width="2.1999999999999886" height="1.5" fill="rgba(255,255,255,.55)"/><rect x="511.5" y="258.3" width="2.2000000000000455" height="1.5" fill="rgba(255,255,255,.55)"/><rect x="528.8" y="252.9" width="2.2000000000000455" height="1.5" fill="rgba(255,255,255,.55)"/><rect x="533.3" y="252.9" width="2.2000000000000455" height="1.5" fill="rgba(255,255,255,.55)"/><rect x="548.5" y="254.5" width="2.2000000000000455" height="1.5" fill="rgba(255,255,255,.55)"/><rect x="553.0" y="254.5" width="2.2000000000000455" height="1.5" fill="rgba(255,255,255,.55)"/><rect x="569.5" y="249.5" width="2.2000000000000455" height="1.5" fill="rgba(255,255,255,.55)"/><rect x="574.0" y="249.5" width="2.2000000000000455" height="1.5" fill="rgba(255,255,255,.55)"/><rect x="674" y="263.3" width="2.2000000000000455" height="1.5" fill="rgba(255,255,255,.55)"/><rect x="682" y="263.3" width="2.2000000000000455" height="1.5" fill="rgba(255,255,255,.55)"/><rect x="422.7" y="275.8" width="11.5" height="1.6" fill="rgba(255,255,255,.55)"/></svg>
<div class="a" style="left:186px;top:41px;width:1.3px;height:355px;background:#8a5cd0"></div>
<svg style="left:180px;top:40px" width="14" height="20" viewBox="0 0 14 20"><path d="M0 0 H13.5 V11.5 L6.75 19 L0 11.5 Z" fill="#5a00a8"/></svg>
<div class="a" style="left:315px;top:357px;width:84px;height:39px;background:#f8f8f8;border-radius:3px"></div>
<div class="a" style="left:407px;top:357px;width:84px;height:39px;background:#f8f8f8;border-radius:3px"></div>
<div class="a" style="left:499px;top:357px;width:84px;height:39px;background:#f8f8f8;border-radius:3px"></div>
<svg style="left:344px;top:368px" width="25" height="24" viewBox="0 0 25 24"><g stroke="#dedede" stroke-width="2.3" fill="none"><circle cx="4.6" cy="18.2" r="3.4"/><circle cx="16.6" cy="15.8" r="3.4"/><path d="M8 18.2 V5 L20 2 V15.8"/></g></svg>
<svg style="left:431px;top:369px" width="36" height="24" viewBox="0 0 36 24"><rect x="1" y="1" width="10" height="10" rx="1.5" fill="#dedede" stroke="#dedede" stroke-width="1.6"/><rect x="13" y="1" width="10" height="10" rx="1.5" fill="none" stroke="#dedede" stroke-width="1.6"/><rect x="25" y="1" width="10" height="10" rx="1.5" fill="#dedede" stroke="#dedede" stroke-width="1.6"/><rect x="1" y="13" width="10" height="10" rx="1.5" fill="none" stroke="#dedede" stroke-width="1.6"/><rect x="13" y="13" width="10" height="10" rx="1.5" fill="#dedede" stroke="#dedede" stroke-width="1.6"/><rect x="25" y="13" width="10" height="10" rx="1.5" fill="none" stroke="#dedede" stroke-width="1.6"/></svg>
<svg style="left:527px;top:369px" width="27" height="23" viewBox="0 0 27 23"><rect x="1" y="1" width="25" height="21" rx="1.5" fill="#dedede"/><rect x="4" y="3" width="5" height="17" fill="#f8f8f8"/><rect x="11" y="3" width="5" height="17" fill="#f8f8f8"/><rect x="18" y="3" width="5" height="17" fill="#f8f8f8"/><rect x="7" y="3" width="3.5" height="10" fill="#dedede"/><rect x="14" y="3" width="3.5" height="10" fill="#dedede"/><rect x="21" y="3" width="3" height="10" fill="#dedede"/></svg>
<div class="a" style="left:186px;top:405px;width:451px;height:8px;background:#e4e4e4;border-radius:4px"></div>
<div class="a" style="left:186px;top:405px;width:39px;height:8px;background:#fff;border:1px solid #c8c8c8;border-radius:4px"></div>
<svg style="left:648px;top:404px" width="12" height="12" viewBox="0 0 12 12"><g stroke="#777" stroke-width="1.3" fill="none" stroke-linecap="round"><circle cx="5.3" cy="5.3" r="4.5"/><path d="M8.6 8.6 L11.5 11.5"/><path d="M3 5.3 H7.6"/><path d="M5.3 3 V7.6"/></g></svg>
<svg style="left:676px;top:404px" width="12" height="12" viewBox="0 0 12 12"><g stroke="#777" stroke-width="1.3" fill="none" stroke-linecap="round"><circle cx="5.3" cy="5.3" r="4.5"/><path d="M8.6 8.6 L11.5 11.5"/><path d="M3 5.3 H7.6"/></g></svg>
<div class="a" style="left:704.5px;top:76.5px;width:7px;height:319px;background:#e6e6e6;border-radius:3.5px"></div>
<div class="a" style="left:705.5px;top:129px;width:5px;height:187px;background:#fff;border-radius:3px"></div>
<div class="a" style="left:578px;top:48.5px;width:19.5px;height:19.5px;background:#5a0ba8;border-radius:50%"></div>
<svg style="left:578px;top:48px" width="20" height="20" viewBox="0 0 20 20"><path d="M4.2 14.8 V9.6 A5.4 5.4 0 0 1 15 9.6 V14.8 Z" fill="#fff"/><path d="M6.4 12.2 V9.6 A3.2 3.2 0 0 1 12.8 9.6 V12.2" stroke="#5a0ba8" stroke-width="1.1" fill="none"/><path d="M8.9 14.8 V9.9 A0.7 0.7 0 0 1 10.3 9.9 V14.8 Z" fill="#5a0ba8"/></svg>
<svg style="left:608px;top:52px" width="13" height="13" viewBox="0 0 13 13"><g stroke="#888" stroke-width="1.1" fill="none"><circle cx="6.5" cy="6.5" r="2"/><path d="M5.4 0.8 H7.6 L8 2.3 L9.4 3 L10.8 2.3 L12.1 4 L11.2 5.3 V7.7 L12.1 9 L10.8 10.7 L9.4 10 L8 10.7 L7.6 12.2 H5.4 L5 10.7 L3.6 10 L2.2 10.7 L0.9 9 L1.8 7.7 V5.3 L0.9 4 L2.2 2.3 L3.6 3 L5 2.3 Z"/></g></svg>
<svg style="left:636px;top:51px" width="13" height="13" viewBox="0 0 13 13"><g stroke="#8a8a8a" stroke-width="1.2" fill="none" stroke-linecap="round" stroke-linejoin="round"><path d="M1.4 5.2 A5 5 0 1 1 6.6 11.3"/><path d="M8.2 9.4 L6.2 11.3 L8 13"/></g></svg>
<div class="a" style="left:663px;top:50px;width:35px;height:35px;background:#5b0aa8;border-radius:50%;box-shadow:0 2px 4px rgba(0,0,0,.25)"></div>
<svg style="left:671px;top:59px" width="18" height="16" viewBox="0 0 18 16"><g stroke="#fff" stroke-width="1.6" fill="none"><circle cx="5" cy="12" r="2.3"/><circle cx="13" cy="10.4" r="2.3"/><path d="M7.3 12 V3.2 L15.3 1.6 V10.4"/></g></svg>
<div class="a" style="left:663px;top:93.5px;width:35px;height:35px;background:#57a0b5;border-radius:50%;box-shadow:0 2px 4px rgba(0,0,0,.25)"></div>
<svg style="left:672px;top:101.5px" width="18" height="18" viewBox="0 0 18 18"><g stroke="#fff" stroke-width="1.5" fill="none" stroke-linecap="round"><circle cx="6.6" cy="6.4" r="3"/><path d="M4.6 8.6 C3.2 10.4 2.6 12.6 2.2 15.2 M8.6 8.6 C10 10.4 10.6 12.6 11 15.2"/><path d="M10.6 3.4 A3 3 0 0 1 13 8.6 C14.3 10.4 14.9 12.6 15.3 15.2"/></g></svg>
<div class="a" style="left:712px;top:47px;width:312px;height:372px;background:#fff;border-radius:4px 0 0 4px;border:1px solid #e4e4e4;border-right:none"></div>
<div class="a" style="left:712px;top:47px;width:312px;height:87.5px;background:#57a0b5;border-radius:4px 0 0 0"></div>
<svg style="left:704px;top:102px" width="8" height="14" viewBox="0 0 8 14"><path d="M8 0 L0.5 7 L8 14 Z" fill="#57a0b5"/></svg>
<div class="t" style="left:728px;top:62px;font-size:14.5px;color:#fff;-webkit-text-stroke:0.25px #fff">Collaborators</div>
<div class="a" style="left:728px;top:93px;width:27px;height:27px;border:1.4px solid #fff;border-radius:50%"></div>
<svg style="left:735px;top:100px" width="13" height="13" viewBox="0 0 13 13"><path d="M6.5 1 V12 M1 6.5 H12" stroke="#fff" stroke-width="1.5"/></svg>
<div class="a" style="left:759px;top:93px;width:27px;height:27px;background:#fff;border-radius:50%"></div>
<div class="a" style="left:760.5px;top:94.5px;width:24px;height:24px;background:#e6d8fb;border-radius:50%"></div>
<div class="a" style="left:763.5px;top:97.5px;width:18px;height:18px;background:#c8aef6;border-radius:50%"></div>
<div class="a" style="left:765.5px;top:99.5px;width:14px;height:14px;background:#bc9ff3;border-radius:50%"></div>
<svg style="left:767.5px;top:104.5px" width="10" height="6" viewBox="0 0 10 6"><path d="M1 1 A4 4 0 0 0 9 1" stroke="#a27fe6" stroke-width="1.2" fill="none"/></svg>
<div class="a" style="left:779.7px;top:113.2px;width:7px;height:7px;background:#5cb176;border:1px solid #d8ecd8;border-radius:50%"></div>
<div class="a" style="left:790.5px;top:93px;width:27px;height:27px;background:#fff;border-radius:50%"></div>
<div class="a" style="left:792px;top:94.5px;width:24px;height:24px;background:#d6f0f8;border-radius:50%"></div>
<div class="a" style="left:795px;top:97.5px;width:18px;height:18px;background:#a8def1;border-radius:50%"></div>
<div class="a" style="left:797px;top:99.5px;width:14px;height:14px;background:#a0d9ee;border-radius:50%"></div>
<svg style="left:799px;top:104.5px" width="10" height="6" viewBox="0 0 10 6"><path d="M1 1 A4 4 0 0 0 9 1" stroke="#7fc3dc" stroke-width="1.2" fill="none"/></svg>
<div class="a" style="left:822px;top:93px;width:28px;height:28px;background:#f2f0f0;border:1px solid #bdbdbd;border-radius:50%"></div>
<div class="t" style="left:829.3px;top:101.2px;font-size:11.2px;color:#707070;">+2</div>
<div class="a" style="left:947px;top:93px;width:62px;height:27px;border:1.4px solid #fff;border-radius:14px"></div>
<svg style="left:959px;top:102px" width="14" height="10" viewBox="0 0 14 10"><g stroke="#fff" stroke-width="1.5" fill="none" stroke-linejoin="round"><rect x="0.8" y="0.8" width="8" height="8.4" rx="0.8"/><path d="M8.8 3.6 L13 1.2 V8.8 L8.8 6.4"/></g></svg>
<div class="t" style="left:977.5px;top:102.3px;font-size:10.2px;color:#fff;font-weight:bold">Call</div>
<div class="a" style="left:713px;top:134px;width:297px;height:175px;overflow:hidden">
<div class="a" style="left:111.5px;top:-1.5px;width:164.5px;height:27.0px;border-radius:4px;background:linear-gradient(100deg,#7db5c8 0%,#62a6bb 60%,#579fb5 100%)"></div>
<svg style="left:275.5px;top:5.5px" width="7" height="12"><path d="M0 0 L6 6 L0 12 Z" fill="#579fb5"/></svg>
<div class="t" style="left:117.5px;top:7.199999999999999px;font-size:10.6px;color:#fff;-webkit-text-stroke:0.2px #fff">beat has improved</div>
<div class="a" style="left:111.5px;top:30px;width:164.5px;height:26.5px;border-radius:4px;background:linear-gradient(100deg,#7db5c8 0%,#62a6bb 60%,#579fb5 100%)"></div>
<svg style="left:275.5px;top:37px" width="7" height="12"><path d="M0 0 L6 6 L0 12 Z" fill="#579fb5"/></svg>
<div class="t" style="left:117.5px;top:38.7px;font-size:10.6px;color:#fff;-webkit-text-stroke:0.2px #fff">I deleted one other one</div>
<div class="a" style="left:111.5px;top:61.5px;width:164.5px;height:27.0px;border-radius:4px;background:linear-gradient(100deg,#7db5c8 0%,#62a6bb 60%,#579fb5 100%)"></div>
<svg style="left:275.5px;top:68.5px" width="7" height="12"><path d="M0 0 L6 6 L0 12 Z" fill="#579fb5"/></svg>
<div class="t" style="left:117.5px;top:70.2px;font-size:10.6px;color:#fff;-webkit-text-stroke:0.2px #fff">There’s so much going on</div>
<div class="a" style="left:87.5px;top:93px;width:188.5px;height:41.5px;border-radius:4px;background:linear-gradient(100deg,#7db5c8 0%,#62a6bb 60%,#579fb5 100%)"></div>
<svg style="left:275.5px;top:100px" width="7" height="12"><path d="M0 0 L6 6 L0 12 Z" fill="#579fb5"/></svg>
<div class="t" style="left:93.5px;top:101.7px;font-size:10.6px;color:#fff;-webkit-text-stroke:0.2px #fff">I’d say best to organise your parts</div>
<div class="t" style="left:93.5px;top:116.2px;font-size:10.6px;color:#fff;-webkit-text-stroke:0.2px #fff">into two sections</div>
<div class="t" style="left:247px;top:118px;font-size:9.3px;color:#a6cfdc">14:54</div>
<div class="a" style="left:111.5px;top:139.5px;width:164.5px;height:27.5px;border-radius:4px;background:linear-gradient(100deg,#7db5c8 0%,#62a6bb 60%,#579fb5 100%)"></div>
<svg style="left:275.5px;top:146.5px" width="7" height="12"><path d="M0 0 L6 6 L0 12 Z" fill="#579fb5"/></svg>
<div class="t" style="left:117.5px;top:148.2px;font-size:10.6px;color:#fff;-webkit-text-stroke:0.2px #fff">played together its too much!</div>
<div class="a" style="left:87.5px;top:171.5px;width:188.5px;height:34.5px;border-radius:4px;background:linear-gradient(100deg,#7db5c8 0%,#62a6bb 60%,#579fb5 100%)"></div>
<svg style="left:275.5px;top:178.5px" width="7" height="12"><path d="M0 0 L6 6 L0 12 Z" fill="#579fb5"/></svg>
</div>
<div class="a" style="left:1010px;top:134px;width:14px;height:175px;background:#f1f1f1"></div>
<svg style="left:1013px;top:139px" width="8" height="5" viewBox="0 0 8 5"><path d="M0.5 4.5 L4 0.5 L7.5 4.5 Z" fill="#555"/></svg>
<svg style="left:1013px;top:298px" width="8" height="5" viewBox="0 0 8 5"><path d="M0.5 0.5 L4 4.5 L7.5 0.5 Z" fill="#555"/></svg>
<div class="a" style="left:1011px;top:247px;width:13px;height:18px;background:#c8c8c8"></div>
<svg style="left:954px;top:320px" width="13" height="10" viewBox="0 0 13 10"><g stroke="#5a1ab0" stroke-width="1.5" fill="none" stroke-linecap="round" stroke-linejoin="round"><path d="M0.8 5 H12"/><path d="M7.5 0.8 L12 5 L7.5 9.2"/></g></svg>
<div class="t" style="left:972.5px;top:320.5px;font-size:10.6px;color:#5a1ab0;-webkit-text-stroke:0.25px #5a1ab0">Poke!</div>
<div class="a" style="left:721px;top:357px;width:295px;height:51px;border:1px solid #cfcfcf;border-radius:2px;background:#fff"></div>
<div class="t" style="left:725.3px;top:365.4px;font-size:11.8px;color:#c6c6c6;letter-spacing:0.17px">Say something to your collaborators...</div>
<div class="a" style="left:0px;top:426px;width:1024px;height:46px;background:#fff"></div>
<svg style="left:14px;top:444px" width="16" height="12" viewBox="0 0 16 12"><g stroke="#c4c4c4" stroke-width="1.1" fill="none" stroke-linejoin="round" stroke-linecap="round"><path d="M1 4 H3.5 L7 1 V11 L3.5 8 H1 Z"/><path d="M9.5 3.5 A3.5 3.5 0 0 1 9.5 8.5"/><path d="M11.5 1.5 A6 6 0 0 1 11.5 10.5"/></g></svg>
<div class="a" style="left:44px;top:449px;width:97px;height:3px;background:#eeeeee;border-radius:2px"></div>
<div class="a" style="left:127px;top:440px;width:20px;height:20px;background:#fff;border:1px solid #bdbdbd;border-radius:50%"></div>
<div class="t" style="left:66.3px;top:437.2px;font-size:10.5px;color:#888;">No volume!</div>
<div class="t" style="left:63.3px;top:462.3px;font-size:9px;color:#888;">Master volume</div>
<div class="t" style="left:185px;top:440.2px;font-size:20px;color:#333;">00:00.0</div>
<div class="a" style="left:273.0px;top:432px;width:35px;height:35px;background:#f3f3f3;border-radius:50%"></div>
<div class="a" style="left:316.3px;top:432px;width:35px;height:35px;background:#f3f3f3;border-radius:50%"></div>
<div class="a" style="left:359.7px;top:432px;width:35px;height:35px;background:#f3f3f3;border-radius:50%"></div>
<div class="a" style="left:403.0px;top:432px;width:35px;height:35px;background:#f3f3f3;border-radius:50%"></div>
<div class="a" style="left:446.2px;top:432px;width:35px;height:35px;background:#f3f3f3;border-radius:50%"></div>
<div class="a" style="left:283px;top:441.8px;width:15px;height:15px;background:#f0405a;border-radius:50%"></div>
<div class="a" style="left:328px;top:443.6px;width:12px;height:12px;background:#333;border-radius:1px"></div>
<svg style="left:360px;top:436px" width="120" height="26" viewBox="0 0 120 26"><g fill="#333"><path d="M23.9 6.4 V18.8 L15.5 12.6 Z"/><path d="M96.7 6.4 V18.8 L105 12.6 Z"/></g><g stroke="#333" stroke-width="1.5" fill="none" stroke-linejoin="miter" stroke-linecap="round"><path d="M18.4 6.7 L10.6 12.6 L18.4 18.5"/><path d="M102.1 6.7 L109.9 12.6 L102.1 18.5"/></g></svg>
<svg style="left:416px;top:442.6px" width="11" height="13" viewBox="0 0 11 13"><path d="M0 0.4 L10.3 6.7 L0 13 Z" fill="#333"/></svg>
<div class="t" style="left:534.6px;top:445.6px;font-size:12px;color:#6a1fc0;-webkit-text-stroke:0.45px #6a1fc0">F</div>
<div class="t" style="left:541.6px;top:443.9px;font-size:9.6px;color:#6a1fc0;font-weight:bold">#</div>
<div class="t" style="left:534px;top:461.5px;font-size:9px;color:#aaa;">Key</div>
<div class="t" style="left:596px;top:445.8px;font-size:11.7px;color:#6a1fc0;-webkit-text-stroke:0.4px #6a1fc0">120</div>
<div class="t" style="left:592px;top:461.5px;font-size:9px;color:#aaa;">Tempo</div>
<div class="a" style="left:653.2px;top:440px;width:27.5px;height:19px;border:1.5px solid #6a1fc0;border-radius:10px"></div>
<div class="t" style="left:660px;top:446.2px;font-size:8.8px;color:#6a1fc0;-webkit-text-stroke:0.3px #6a1fc0">Off</div>
<svg style="left:688px;top:441px" width="14" height="12" viewBox="0 0 14 12"><g stroke="#888" stroke-width="1.1" fill="none"><circle cx="7" cy="6" r="2"/><path d="M5.9 0.5 H8.1 L8.5 2 L9.9 2.6 L11.3 1.9 L12.6 3.6 L11.7 4.9 V7.1 L12.6 8.4 L11.3 10.1 L9.9 9.4 L8.5 10 L8.1 11.5 H5.9 L5.5 10 L4.1 9.4 L2.7 10.1 L1.4 8.4 L2.3 7.1 V4.9 L1.4 3.6 L2.7 1.9 L4.1 2.6 L5.5 2 Z"/></g></svg>
<div class="t" style="left:658px;top:461.5px;font-size:9px;color:#aaa;">Metronome</div>
<div class="a" style="left:901px;top:429px;width:107px;height:36px;background:#c8c9ce;border-radius:18px"></div>
<svg style="left:917px;top:439px" width="17" height="17" viewBox="0 0 17 17"><circle cx="8.5" cy="8.5" r="7.3" stroke="#4a4a4a" stroke-width="1.8" fill="none"/><path d="M6.2 6.5 A2.4 2.4 0 1 1 9.5 8.6 C8.8 9 8.5 9.4 8.5 10.3" stroke="#4a4a4a" stroke-width="1.6" fill="none" stroke-linecap="round"/><circle cx="8.5" cy="12.7" r="1" fill="#4a4a4a"/></svg>
<div class="t" style="left:940.5px;top:441.5px;font-size:12.6px;color:#4a4a4a;font-weight:bold">Support</div></body></html>
